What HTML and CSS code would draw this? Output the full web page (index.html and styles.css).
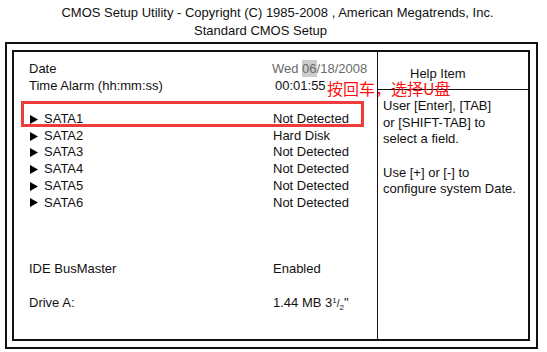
FILE: index.html
```html
<!DOCTYPE html>
<html>
<head>
<meta charset="utf-8">
<link rel="stylesheet" href="styles.css">
</head>
<body>
<div class="page">
  <div class="header">
    <div class="title">CMOS Setup Utility - Copyright (C) 1985-2008 , American Megatrends, Inc.</div>
    <div class="subtitle">Standard CMOS Setup</div>
  </div>
  <div class="outer">
    <div class="inner">
      <div class="main">
        <div class="row"><span class="label">Date</span><span class="value date">Wed <span class="hl">06</span>/18/2008</span></div>
        <div class="row"><span class="label">Time Alarm (hh:mm:ss)</span><span class="value time">00:01:55</span></div>
        <div class="row"></div>
        <div class="row"><span class="label"><svg class="arrow" viewBox="0 0 8 9"><polygon points="0,0 8,4.5 0,9"/></svg>SATA1</span><span class="value">Not Detected</span></div>
        <div class="row"><span class="label"><svg class="arrow" viewBox="0 0 8 9"><polygon points="0,0 8,4.5 0,9"/></svg>SATA2</span><span class="value">Hard Disk</span></div>
        <div class="row"><span class="label"><svg class="arrow" viewBox="0 0 8 9"><polygon points="0,0 8,4.5 0,9"/></svg>SATA3</span><span class="value">Not Detected</span></div>
        <div class="row"><span class="label"><svg class="arrow" viewBox="0 0 8 9"><polygon points="0,0 8,4.5 0,9"/></svg>SATA4</span><span class="value">Not Detected</span></div>
        <div class="row"><span class="label"><svg class="arrow" viewBox="0 0 8 9"><polygon points="0,0 8,4.5 0,9"/></svg>SATA5</span><span class="value">Not Detected</span></div>
        <div class="row"><span class="label"><svg class="arrow" viewBox="0 0 8 9"><polygon points="0,0 8,4.5 0,9"/></svg>SATA6</span><span class="value">Not Detected</span></div>
        <div class="row"></div>
        <div class="row"></div>
        <div class="row"></div>
        <div class="row"><span class="label">IDE BusMaster</span><span class="value">Enabled</span></div>
        <div class="row"></div>
        <div class="row"><span class="label">Drive A:</span><span class="value">1.44 MB 3<span class="sup">1</span><span class="slash">/</span><span class="sub">2</span>"</span></div>
      </div>
      <div class="help">
        <div class="help-head">Help Item</div>
        <div class="help-body">
          <div class="hline">User [Enter], [TAB]</div>
          <div class="hline">or [SHIFT-TAB] to</div>
          <div class="hline">select a field.</div>
          <div class="hline"></div>
          <div class="hline">Use [+] or [-] to</div>
          <div class="hline">configure system Date.</div>
        </div>
      </div>
    </div>
  </div>
  <div class="callout-box"></div>
  <div class="callout-text">按回车，选择U盘</div>
</div>
</body>
</html>
```

FILE: styles.css
```css
html, body {
  margin: 0;
  padding: 0;
  background: #ffffff;
}

.page {
  position: relative;
  width: 547px;
  height: 352px;
  font-family: "Liberation Sans", Arial, sans-serif;
  font-size: 13px;
  color: #111111;
  overflow: hidden;
}

.header {
  padding-top: 4px;
  height: 38px;
  text-align: center;
}

.title {
  line-height: 18px;
  padding-left: 8px;
}

.subtitle {
  line-height: 18px;
  padding-right: 26px;
}

.outer {
  margin-left: 5px;
  width: 533px;
  height: 307px;
  box-sizing: border-box;
  border: 2px solid #111111;
  padding: 6px 6px 6px 5px;
}

.inner {
  height: 100%;
  box-sizing: border-box;
  border: 2px solid #111111;
  display: grid;
  grid-template-columns: 363px 1fr;
}

.main {
  padding: 9px 0 0 15px;
}

.row {
  display: grid;
  grid-template-columns: 243px auto;
  height: 16.7px;
  line-height: 16.7px;
  white-space: nowrap;
}

.label {
  display: flex;
  align-items: center;
}

.arrow {
  width: 8px;
  height: 9px;
  margin-left: 1px;
  margin-right: 6px;
  fill: #000000;
}

.value {
  padding-left: 1px;
}

.value.date {
  padding-left: 0;
  color: #6a6a6a;
}

.value.time {
  padding-left: 3px;
}

.hl {
  background: #cccccc;
  padding: 1px 0;
}

.sup {
  font-size: 8px;
  vertical-align: 4px;
  line-height: 0;
}

.slash {
  font-size: 10px;
}

.sub {
  font-size: 8px;
  vertical-align: -3px;
  line-height: 0;
}

.help {
  border-left: 1px solid #111111;
  display: flex;
  flex-direction: column;
}

.help-head {
  height: 38px;
  box-sizing: border-box;
  padding: 14px 0 0 32px;
  line-height: 16.7px;
  border-bottom: 1px solid #111111;
}

.help-body {
  padding: 8px 0 0 5px;
}

.hline {
  height: 16.7px;
  line-height: 16.7px;
  white-space: nowrap;
}

.callout-box {
  position: absolute;
  left: 21px;
  top: 101px;
  width: 343px;
  height: 26px;
  box-sizing: border-box;
  border: 3px solid #ee3b3b;
}

.callout-text {
  position: absolute;
  left: 327px;
  top: 79px;
  font-family: "Noto Sans CJK SC", "Noto Sans", sans-serif;
  font-size: 16px;
  line-height: 18px;
  color: #ff1010;
  white-space: nowrap;
}
```
